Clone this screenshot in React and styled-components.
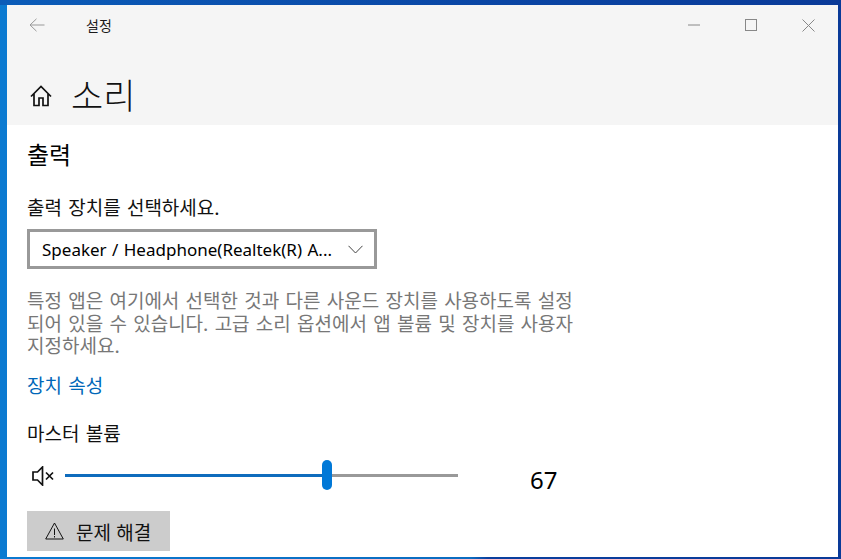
import React from 'react'
import styled, { createGlobalStyle } from 'styled-components'

const KR = `"Noto Sans CJK KR", "Noto Sans", sans-serif`

const Global = createGlobalStyle`
    html, body { margin: 0; padding: 0; }
    body { width: 841px; height: 559px; overflow: hidden; font-family: ${KR}; }
`

const Desktop = styled.div`
    width: 841px;
    height: 559px;
    box-sizing: border-box;
    padding: 5px 3px 2px 7px;
    background:
        linear-gradient(90deg, #0b5cb8 0%, #0a45a4 60%, #0a3a98 100%) top / 100% 5px no-repeat,
        linear-gradient(90deg, #0b7ad1 0%, #0b6cc0 56%, #0a3f9e 58%, #0a3a98 100%);
`

const Window = styled.div`
    width: 100%;
    height: 100%;
    background: #fff;
    display: flex;
    flex-direction: column;
    overflow: hidden;
`

const Header = styled.header`
    height: 120px;
    flex: none;
    background: #f5f5f5;
    display: flex;
    flex-direction: column;
`

const TitleBar = styled.div`
    height: 40px;
    display: flex;
    align-items: center;
    padding-left: 22px;
`

const Title = styled.span`
    margin-left: 41px;
    font-size: 14px;
    line-height: 20px;
    color: #1a1a1a;
`

const WindowControls = styled.div`
    margin-left: auto;
    display: flex;
    align-items: center;
    gap: 45px;
    padding-right: 23px;
`

const PageHead = styled.div`
    display: flex;
    align-items: center;
    padding: 27px 0 0 23px;
`

const HomeIcon = styled.span`
    display: flex;
    margin-top: 4px;
`

const PageTitle = styled.h1`
    margin: 0 0 0 19px;
    font-size: 35px;
    line-height: 44px;
    font-weight: 300;
    color: #111;
`

const Content = styled.main`
    flex: 1;
    display: flex;
    flex-direction: column;
    align-items: flex-start;
    padding: 11px 0 0 20px;
    font-size: 19px;
    word-spacing: 2px;
`

const Section = styled.h2`
    margin: 0;
    font-size: 24px;
    line-height: 36px;
    font-weight: 400;
    color: #000;
`

const Label = styled.div`
    margin-top: ${p => p.$top}px;
    line-height: 24px;
    color: #111;
`

const Select = styled.div`
    margin-top: 10px;
    width: 350px;
    height: 40px;
    box-sizing: border-box;
    border: 3px solid #999;
    display: flex;
    align-items: center;
    justify-content: space-between;
    padding: 0 11px 0 12px;
    font-family: "Noto Sans", sans-serif;
    font-size: 17px;
    word-spacing: 1px;
    color: #000;
`

const Note = styled.p`
    margin: 20px 0 0;
    width: 560px;
    line-height: 22.5px;
    word-break: keep-all;
    color: #777;
`

const DeviceLink = styled.a`
    margin-top: 16.5px;
    line-height: 24px;
    color: #0067b8;
`

const VolumeRow = styled.div`
    margin-top: 11px;
    height: 39px;
    display: flex;
    align-items: center;
    padding-left: 5px;
`

const Track = styled.div`
    margin-left: 11px;
    width: 393px;
    height: 3px;
    background: #999;
    position: relative;
`

const Fill = styled.div`
    height: 100%;
    background: #0f6cbd;
`

const Thumb = styled.div`
    position: absolute;
    top: -14px;
    width: 10px;
    height: 30px;
    margin-left: -5px;
    border-radius: 5px;
    background: #0078d7;
`

const VolumeValue = styled.span`
    margin: 8px 0 0 72px;
    font-family: "Noto Sans", sans-serif;
    font-size: 24px;
    line-height: 32px;
    color: #000;
`

const FixButton = styled.button`
    margin-top: 16px;
    width: 143px;
    height: 40px;
    border: 0;
    padding: 0 0 0 18px;
    background: #ccc;
    display: flex;
    align-items: center;
    gap: 12px;
    font-family: ${KR};
    font-size: 19px;
    word-spacing: 1px;
    color: #111;
`

const Icon = ({ w, h, children, stroke = '#777', sw = 1 }) => (
    <svg width={w} height={h} viewBox={`0 0 ${w} ${h}`} fill='none' stroke={stroke} strokeWidth={sw}>
        {children}
    </svg>
)

const volume = 67
const trackPercent = 66.7

const App = () => {
    return (
        <Desktop>
            <Global />
            <Window>
                <Header>
                    <TitleBar>
                        <Icon w={16} h={14} stroke='#999'>
                            <path d='M15.5 7H1M7.5 .8 1 7l6.5 6.2' />
                        </Icon>
                        <Title>설정</Title>
                        <WindowControls>
                            <Icon w={12} h={2} stroke='#888'><path d='M0 1h12' /></Icon>
                            <Icon w={12} h={12} stroke='#888'><rect x='.5' y='.5' width='11' height='11' /></Icon>
                            <Icon w={13} h={13} stroke='#888'><path d='M.5.5l12 12M12.5.5l-12 12' /></Icon>
                        </WindowControls>
                    </TitleBar>
                    <PageHead>
                        <HomeIcon>
                            <Icon w={22} h={22} stroke='#111' sw={1.7}>
                                <path d='M1 11.5 11 1.5 21 11.5M4 9v11.5h5v-7.5h4v7.5h5V9' />
                            </Icon>
                        </HomeIcon>
                        <PageTitle>소리</PageTitle>
                    </PageHead>
                </Header>
                <Content>
                    <Section>출력</Section>
                    <Label $top={23}>출력 장치를 선택하세요.</Label>
                    <Select>
                        <span>Speaker / Headphone(Realtek(R) A...</span>
                        <Icon w={15} h={9} stroke='#444'><path d='M.5.8 7.5 8l7-7.2' /></Icon>
                    </Select>
                    <Note>
                        특정 앱은 여기에서 선택한 것과 다른 사운드 장치를 사용하도록 설정
                        되어 있을 수 있습니다. 고급 소리 옵션에서 앱 볼륨 및 장치를 사용자
                        지정하세요.
                    </Note>
                    <DeviceLink>장치 속성</DeviceLink>
                    <Label $top={24}>마스터 볼륨</Label>
                    <VolumeRow>
                        <Icon w={22} h={20} stroke='#111' sw={1.7}>
                            <path d='M1 6h4.5L10.5 1v18l-5-5H1zM14 6.5l7 7M21 6.5l-7 7' />
                        </Icon>
                        <Track>
                            <Fill style={{ width: `${trackPercent}%` }} />
                            <Thumb style={{ left: `${trackPercent}%` }} />
                        </Track>
                        <VolumeValue>{volume}</VolumeValue>
                    </VolumeRow>
                    <FixButton>
                        <Icon w={19} h={18} stroke='#111'>
                            <path d='M9.5 1 18.3 17H.7zM9.5 6.5v6.5M9.5 14v1.5' />
                        </Icon>
                        문제 해결
                    </FixButton>
                </Content>
            </Window>
        </Desktop>
    )
}

export default App
